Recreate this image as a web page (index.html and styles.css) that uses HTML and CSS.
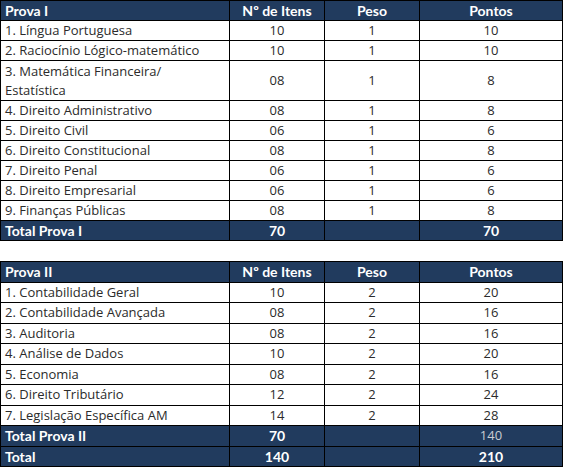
FILE: index.html
```html
<!DOCTYPE html>
<html lang="pt">
<head>
<meta charset="utf-8">
<link rel="stylesheet" href="styles.css">
</head>
<body>
<table class="grade">
  <colgroup><col class="c1"><col class="c2"><col class="c3"><col class="c4"></colgroup>
  <tr class="head"><th class="name">Prova I</th><th>Nº de Itens</th><th>Peso</th><th>Pontos</th></tr>
  <tr><td class="name">1. Língua Portuguesa</td><td>10</td><td>1</td><td>10</td></tr>
  <tr><td class="name">2. Raciocínio Lógico-matemático</td><td>10</td><td>1</td><td>10</td></tr>
  <tr class="tall"><td class="name">3. Matemática Financeira/<br>Estatística</td><td>08</td><td>1</td><td>8</td></tr>
  <tr><td class="name">4. Direito Administrativo</td><td>08</td><td>1</td><td>8</td></tr>
  <tr><td class="name">5. Direito Civil</td><td>06</td><td>1</td><td>6</td></tr>
  <tr><td class="name">6. Direito Constitucional</td><td>08</td><td>1</td><td>8</td></tr>
  <tr><td class="name">7. Direito Penal</td><td>06</td><td>1</td><td>6</td></tr>
  <tr><td class="name">8. Direito Empresarial</td><td>06</td><td>1</td><td>6</td></tr>
  <tr><td class="name">9. Finanças Públicas</td><td>08</td><td>1</td><td>8</td></tr>
  <tr class="total"><td class="name">Total Prova I</td><td>70</td><td></td><td>70</td></tr>
</table>

<table class="grade second">
  <colgroup><col class="c1"><col class="c2"><col class="c3"><col class="c4"></colgroup>
  <tr class="head"><th class="name">Prova II</th><th>Nº de Itens</th><th>Peso</th><th>Pontos</th></tr>
  <tr><td class="name">1. Contabilidade Geral</td><td>10</td><td>2</td><td>20</td></tr>
  <tr><td class="name">2. Contabilidade Avançada</td><td>08</td><td>2</td><td>16</td></tr>
  <tr><td class="name">3. Auditoria</td><td>08</td><td>2</td><td>16</td></tr>
  <tr><td class="name">4. Análise de Dados</td><td>10</td><td>2</td><td>20</td></tr>
  <tr><td class="name">5. Economia</td><td>08</td><td>2</td><td>16</td></tr>
  <tr><td class="name">6. Direito Tributário</td><td>12</td><td>2</td><td>24</td></tr>
  <tr><td class="name">7. Legislação Específica AM</td><td>14</td><td>2</td><td>28</td></tr>
  <tr class="total"><td class="name">Total Prova II</td><td>70</td><td></td><td class="light">140</td></tr>
  <tr class="total"><td class="name">Total</td><td>140</td><td></td><td>210</td></tr>
</table>
</body>
</html>
```
FILE: styles.css
```css
html, body {
  margin: 0;
  padding: 0;
  background: #ffffff;
}
body {
  font-family: "Open Sans", "Liberation Sans", sans-serif;
  color: #2b2b2b;
}
.grade {
  border-collapse: collapse;
  table-layout: fixed;
  width: 563px;
  margin: 0;
}
.grade.second {
  margin-top: 20px;
}
.c1 { width: 229px; }
.c2 { width: 95px; }
.c3 { width: 95px; }
.c4 { width: 143px; }
.grade th, .grade td {
  border: 1px solid #000;
  padding: 0 4px;
  height: 19px;
  text-align: center;
  vertical-align: middle;
  font-size: 13px;
  line-height: 19px;
  white-space: nowrap;
}
.grade .tall td { height: 39px; }
.grade .name { text-align: left; }
.grade th, .grade .total td {
  background: #213b5e;
  color: #ffffff;
  font-family: "Lato", "Liberation Sans", sans-serif;
  font-weight: 700;
  font-size: 14px;
}
.grade .total td.light {
  color: #c9cdd3;
  font-family: "Open Sans", "Liberation Sans", sans-serif;
  font-weight: 400;
  font-size: 13px;
}
.second td, .second th { height: 19.5px; }
```
